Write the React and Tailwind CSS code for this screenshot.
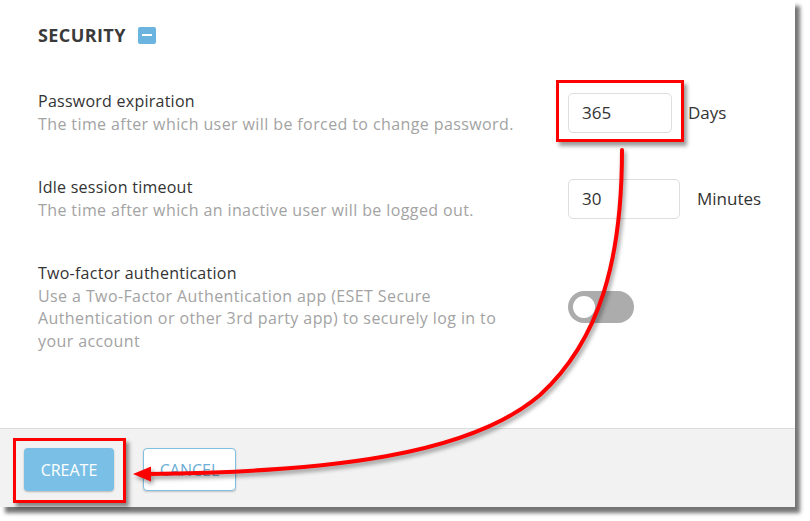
export default function App() {
  return (
    <div className="relative w-[810px] h-[521px] bg-white font-['Open_Sans',sans-serif] overflow-hidden">
      <div className="w-[795px] h-[507px] bg-white flex flex-col shadow-[5px_6px_4px_rgba(0,0,0,0.55)]">
        <div className="flex-1 pl-[38px] pt-[23px]">
          <div className="flex items-center gap-[12px] h-[24px]">
            <span className="text-[18px] font-bold text-[#3a3a3a] tracking-[0.4px]">SECURITY</span>
            <span className="w-[18px] h-[17px] rounded-[2px] bg-[#6cb4e0] flex items-center justify-center">
              <span className="w-[10px] h-[2px] bg-white" />
            </span>
          </div>

          <div className="mt-[43px] flex flex-col gap-[40px]">
            <div className="flex items-center">
              <div className="w-[530px] text-[16px] leading-[23px]">
                <div className="text-[#333] tracking-[0.25px]">Password expiration</div>
                <div className="text-[#a3a3a3] tracking-[0.4px]">The time after which user will be forced to change password.</div>
              </div>
              <div className="flex items-center gap-[16px]">
                <div className="relative">
                  <div className="w-[104px] h-[40px] rounded-[5px] border border-[#dedede] bg-white flex items-center pl-[13px] text-[17px] text-[#333]">365</div>
                  <span className="absolute left-[-12px] top-[-13px] w-[128px] h-[62px] border-[3px] border-[#f00] shadow-[3px_4px_4px_rgba(0,0,0,0.4)]" />
                </div>
                <span className="text-[17px] text-[#333]">Days</span>
              </div>
            </div>

            <div className="flex items-center">
              <div className="w-[530px] text-[16px] leading-[23px]">
                <div className="text-[#333] tracking-[0.25px]">Idle session timeout</div>
                <div className="text-[#a3a3a3] tracking-[0.4px]">The time after which an inactive user will be logged out.</div>
              </div>
              <div className="flex items-center gap-[17px]">
                <div className="w-[112px] h-[40px] rounded-[5px] border border-[#dedede] bg-white flex items-center pl-[13px] text-[17px] text-[#333]">30</div>
                <span className="text-[17px] text-[#333]">Minutes</span>
              </div>
            </div>

            <div className="flex items-center">
              <div className="w-[530px] text-[16px] leading-[22.5px]">
                <div className="text-[#333] tracking-[0.25px]">Two-factor authentication</div>
                <div className="text-[#a3a3a3] tracking-[0.4px]">
                  Use a Two-Factor Authentication app (ESET Secure
                  <br />
                  Authentication or other 3rd party app) to securely log in to
                  <br />
                  your account
                </div>
              </div>
              <div className="w-[66px] h-[32px] rounded-full bg-[#acacac] flex items-center pl-[5px]">
                <span className="w-[22px] h-[22px] rounded-full bg-white" />
              </div>
            </div>
          </div>
        </div>

        <div className="h-[79px] bg-[#f2f2f2] border-t border-[#dcdcdc] flex items-start pt-[19px] pl-[24px] gap-[29px]">
          <div className="relative">
            <button className="w-[90px] h-[43px] rounded-[4px] bg-[#7abfe6] text-white text-[16px] shadow-[0_1px_2px_rgba(0,0,0,0.25)]">CREATE</button>
            <span className="absolute left-[-11px] top-[-10px] w-[113px] h-[65px] border-[3px] border-[#f00] shadow-[3px_4px_4px_rgba(0,0,0,0.45)]" />
          </div>
          <button className="w-[93px] h-[43px] rounded-[4px] bg-white border border-[#7fbfe2] text-[#6aaed6] text-[16px] shadow-[0_1px_2px_rgba(0,0,0,0.2)]">CANCEL</button>
        </div>
      </div>

      <svg className="absolute inset-0 pointer-events-none drop-shadow-[2px_3px_2px_rgba(0,0,0,0.4)]" width="810" height="521" viewBox="0 0 810 521">
        <path d="M622 150 C622 260 600 340 540 395 C470 455 330 472 148 474" fill="none" stroke="#f00" strokeWidth="4" strokeLinecap="round" />
        <polygon points="133,474 151,466.5 151,481.5" fill="#f00" />
      </svg>
    </div>
  );
}
